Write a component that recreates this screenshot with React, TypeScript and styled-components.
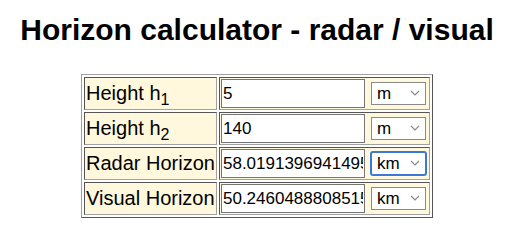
import React from 'react'
import styled, { createGlobalStyle } from 'styled-components'

const GlobalStyle = createGlobalStyle`
  body {
    margin: 8px 17px 8px 8px;
    background: #fff;
    font-family: 'Liberation Sans', Arial, sans-serif;
    color: #000;
  }
`

const Title = styled.h1`
  font-size: 30px;
  font-weight: bold;
  text-align: center;
  margin: 5px 0 27px;
`

const Table = styled.table`
  margin: 0 auto;
  border: 1px solid;
  border-color: #a0a0a0 #555 #555 #a0a0a0;
  border-collapse: separate;
  border-spacing: 2px;
`

const Cell = styled.td`
  background: #fff8dc;
  border: 1px solid;
  border-color: #555 #a0a0a0 #a0a0a0 #555;
  padding: 1px;
  white-space: nowrap;
  vertical-align: middle;
`

const LabelCell = styled(Cell)`
  font-size: 20px;
  line-height: 23px;

  sub {
    font-size: 16px;
    line-height: 0;
  }
`

const FieldRow = styled.div`
  display: flex;
  align-items: center;
`

const ValueInput = styled.input`
  box-sizing: border-box;
  width: 144px;
  height: 29px;
  font-size: 17px;
  font-family: 'Liberation Sans', Arial, sans-serif;
  padding: 0 1px;
  border: 1px solid #767676;
  margin: 0;
  background: #fff;
  color: #000;
  outline: none;
`

const SelectWrap = styled.span`
  position: relative;
  display: inline-block;
  margin: 0 2px 0 6px;
`

const UnitSelect = styled.select<{ $focus?: boolean }>`
  appearance: none;
  box-sizing: border-box;
  display: block;
  width: 55px;
  height: 23px;
  padding: 0 0 0 5px;
  font-size: 17px;
  font-family: 'Liberation Sans', Arial, sans-serif;
  color: #000;
  background: #fff;
  border: 1px solid ${(p) => (p.$focus ? '#3c78d8' : '#8a8a8a')};
  border-radius: ${(p) => (p.$focus ? '2px' : '0')};
  box-shadow: ${(p) => (p.$focus ? '0 0 0 1px #3c78d8' : 'none')};
  outline: none;
`

const Chevron = styled.svg`
  position: absolute;
  right: 6px;
  top: 8px;
  pointer-events: none;
`

const rows = [
  { label: 'Height h', sub: '1', value: '5', unit: 'm' },
  { label: 'Height h', sub: '2', value: '140', unit: 'm' },
  { label: 'Radar Horizon', value: '58.01913969414955', unit: 'km', focus: true },
  { label: 'Visual Horizon', value: '50.24604888085152', unit: 'km' },
]

export default function App() {
  return (
    <>
      <GlobalStyle />
      <Title>Horizon calculator - radar / visual</Title>
      <Table>
        <tbody>
          {rows.map((r) => (
            <tr key={r.label + (r.sub || '')}>
              <LabelCell>
                {r.label}
                {r.sub && <sub>{r.sub}</sub>}
              </LabelCell>
              <Cell>
                <FieldRow>
                  <ValueInput defaultValue={r.value} />
                  <SelectWrap>
                    <UnitSelect defaultValue={r.unit} $focus={r.focus}>
                      <option value="m">m</option>
                      <option value="km">km</option>
                      <option value="ft">ft</option>
                    </UnitSelect>
                    <Chevron width="10" height="6" viewBox="0 0 10 6">
                      <path d="M1 1l4 4 4-4" fill="none" stroke="#8a8a8a" strokeWidth="1.2" />
                    </Chevron>
                  </SelectWrap>
                </FieldRow>
              </Cell>
            </tr>
          ))}
        </tbody>
      </Table>
    </>
  )
}
